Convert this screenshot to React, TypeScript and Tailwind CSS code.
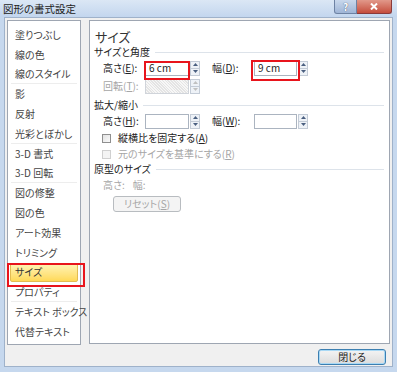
const items: { label: string; sep?: boolean; selected?: boolean }[] = [
  { label: "塗りつぶし" },
  { label: "線の色" },
  { label: "線のスタイル", sep: true },
  { label: "影" },
  { label: "反射" },
  { label: "光彩とぼかし", sep: true },
  { label: "3-D 書式" },
  { label: "3-D 回転", sep: true },
  { label: "図の修整" },
  { label: "図の色" },
  { label: "アート効果" },
  { label: "トリミング" },
  { label: "サイズ", selected: true },
  { label: "プロパティ", sep: true },
  { label: "テキスト ボックス" },
  { label: "代替テキスト" },
];

const Spin = ({ disabled }: { disabled?: boolean }) => (
  <div className="ml-[1px] flex h-[15px] w-[10px] flex-col border border-[#c3cbd6] bg-[#eef2f7]">
    <div className="flex flex-1 items-center justify-center border-b border-[#c3cbd6]">
      <svg width="5" height="3" viewBox="0 0 5 3">
        <path d="M0 3 L2.5 0 L5 3 Z" fill={disabled ? "#c0c0c0" : "#4a5f80"} />
      </svg>
    </div>
    <div className="flex flex-1 items-center justify-center">
      <svg width="5" height="3" viewBox="0 0 5 3">
        <path d="M0 0 L2.5 3 L5 0 Z" fill={disabled ? "#c0c0c0" : "#4a5f80"} />
      </svg>
    </div>
  </div>
);

const GroupLabel = ({ text }: { text: string }) => (
  <div className="flex h-[14px] items-center text-[10px] text-[#222]">
    <span>{text}</span>
    <div className="ml-[5px] mr-[5px] h-px flex-1 bg-[#dde3ea]" />
  </div>
);

const App = () => {
  return (
    <div className="relative flex h-[372px] w-[397px] flex-col overflow-hidden whitespace-nowrap bg-[#c6d8ee] font-['Noto_Sans_CJK_JP',sans-serif] leading-none [font-feature-settings:'palt']">
      {/* title bar */}
      <div className="flex h-[17px] items-start justify-between bg-gradient-to-b from-[#dbe7f5] to-[#c3d6ee]">
        <span className="pl-[3px] pt-[4px] text-[10.5px] text-[#222]">図形の書式設定</span>
        <div className="mr-[5px] flex">
          <div className="flex h-[14px] w-[23px] items-center justify-center rounded-bl-[3px] border border-t-0 border-[#6d82a3] bg-gradient-to-b from-[#c9d8ec] to-[#9fb5d6] text-[10px] font-bold text-white [text-shadow:0_0_1px_#203050]">
            ?
          </div>
          <div className="flex h-[14px] w-[35px] items-center justify-center rounded-br-[3px] border border-l-0 border-t-0 border-[#8a3a3a] bg-gradient-to-b from-[#e1988a] to-[#c44c3c]">
            <svg width="8" height="7" viewBox="0 0 8 7">
              <path d="M1 0.5 L7 6.5 M7 0.5 L1 6.5" stroke="#fff" strokeWidth="2" />
            </svg>
          </div>
        </div>
      </div>

      {/* client */}
      <div className="mx-[4px] mb-[5px] flex flex-1 flex-col border border-[#9fb2ca] bg-[#f0f0f0] px-[2px] pt-[2px]">
        <div className="flex gap-[8px]">
          {/* list */}
          <div className="h-[325px] w-[74px] border border-[#9ea6b2] bg-white pt-[4px]">
            {items.map((it) => (
              <div key={it.label} className="relative h-[19.8px] px-[2px]">
                <div
                  className={
                    it.selected
                      ? "flex h-full items-center rounded-[2px] border border-[#e2bc52] bg-gradient-to-b from-[#fff4b4] to-[#ffd957] pl-[4px] text-[10px] text-[#333]"
                      : "flex h-full items-center pl-[5px] text-[10px] text-[#444]"
                  }
                >
                  {it.label}
                </div>
                {it.sep && <div className="absolute bottom-0 left-[3px] right-[3px] h-px bg-[#ededed]" />}
              </div>
            ))}
          </div>

          {/* right panel */}
          <div className="flex h-[324px] w-[301px] flex-col border border-[#9ea6b2] bg-white pl-[4px]">
            <div className="ml-[1px] mt-[7px] flex h-[16px] items-center text-[13px] text-[#333]">サイズ</div>
            <div className="mt-[1px]">
              <GroupLabel text="サイズと角度" />
            </div>
            <div className="flex h-[18px] items-center pl-[9px] text-[10px] text-[#222]">
              <span className="w-[42px]">高さ(<u>E</u>):</span>
              <div className="flex h-[15px] w-[44px] items-center border border-[#abb4c0] bg-white pl-[3px]">6 cm</div>
              <Spin />
              <span className="ml-[12px] w-[42px]">幅(<u>D</u>):</span>
              <div className="flex h-[15px] w-[43px] items-center border border-[#abb4c0] bg-white pl-[3px]">9 cm</div>
              <Spin />
            </div>
            <div className="flex h-[18px] items-center pl-[9px] text-[10px] text-[#a6a6a6]">
              <span className="w-[42px]">回転(<u>T</u>):</span>
              <div className="h-[15px] w-[44px] border border-[#d0d4da] bg-[repeating-linear-gradient(45deg,#e4e4e4_0px,#e4e4e4_1px,#f7f7f7_1px,#f7f7f7_2px)]" />
              <Spin disabled />
            </div>
            <div className="mt-[3px]">
              <GroupLabel text="拡大/縮小" />
            </div>
            <div className="flex h-[18px] items-center pl-[9px] text-[10px] text-[#222]">
              <span className="w-[42px]">高さ(<u>H</u>):</span>
              <div className="h-[15px] w-[44px] border border-[#abb4c0] bg-white" />
              <Spin />
              <span className="ml-[12px] w-[42px]">幅(<u>W</u>):</span>
              <div className="h-[15px] w-[43px] border border-[#abb4c0] bg-white" />
              <Spin />
            </div>
            <div className="flex h-[16px] items-center pl-[8px] text-[10px] text-[#222]">
              <div className="h-[9px] w-[9px] border border-[#8f8f8f] bg-gradient-to-br from-[#e2e2e2] to-[#fafafa]" />
              <span className="ml-[7px]">縦横比を固定する(<u>A</u>)</span>
            </div>
            <div className="flex h-[16px] items-center pl-[8px] text-[10px] text-[#a6a6a6]">
              <div className="h-[9px] w-[9px] border border-[#d0d0d0] bg-[#f4f4f4]" />
              <span className="ml-[7px]">元のサイズを基準にする(<u>R</u>)</span>
            </div>
            <GroupLabel text="原型のサイズ" />
            <div className="mt-[1px] flex h-[16px] items-center pl-[9px] text-[10px] text-[#a6a6a6]">
              <span>高さ:</span>
              <span className="ml-[8px]">幅:</span>
            </div>
            <div className="ml-[19px] mt-[3px] flex h-[16px] w-[68px] items-center justify-center rounded-[3px] border border-[#b8bcc0] bg-[#f4f4f4] text-[10px] text-[#a6a6a6]">
              リセット(<u>S</u>)
            </div>
          </div>
        </div>

        <div className="mr-[4px] mt-[4px] flex justify-end">
          <div className="flex h-[16px] w-[68px] items-center justify-center rounded-[3px] border border-[#3c7fb1] bg-gradient-to-b from-[#f4f4f4] to-[#dcdcdc] text-[10px] text-[#222] shadow-[inset_0_0_0_1px_#a9d9f5]">
            閉じる
          </div>
        </div>
      </div>

      {/* red annotation frames */}
      <div className="absolute left-[144px] top-[61px] h-[19px] w-[46px] border-2 border-[#e8141c]" />
      <div className="absolute left-[251px] top-[60px] h-[21px] w-[49px] border-2 border-[#e8141c]" />
      <div className="absolute left-[7px] top-[263px] h-[24px] w-[78px] border-2 border-[#e8141c]" />
    </div>
  );
};

export default App;
